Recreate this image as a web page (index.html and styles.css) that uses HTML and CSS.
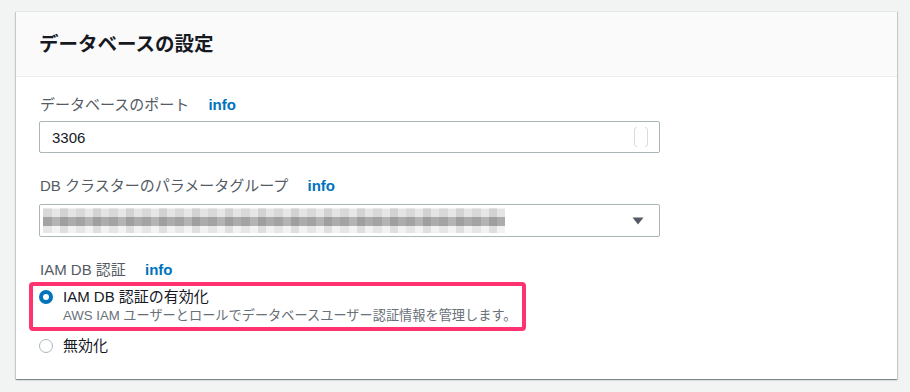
FILE: index.html
```html
<!DOCTYPE html>
<html lang="ja">
<head>
    <meta charset="UTF-8">
    <meta name="viewport" content="width=device-width, initial-scale=1.0">
    <title>データベースの設定</title>
    <link rel="stylesheet" href="styles.css">
</head>
<body>
    <div class="page">
        <div class="panel">
            <div class="panel-header">
                <h2 class="panel-title">データベースの設定</h2>
            </div>
            <div class="panel-body">
                <div class="field">
                    <div class="field-label">データベースのポート <a class="info">info</a></div>
                    <div class="text-input">
                        <span>3306</span>
                        <svg class="spinner" width="18" height="22" viewBox="0 0 18 22">
                            <path d="M5 1.5 Q2.5 1.5 2.5 4 V18 Q2.5 20.5 5 20.5" fill="none" stroke="#d9dcdc" stroke-width="1"/>
                            <path d="M13 1.5 Q15.5 1.5 15.5 4 V18 Q15.5 20.5 13 20.5" fill="none" stroke="#d9dcdc" stroke-width="1"/>
                        </svg>
                    </div>
                </div>

                <div class="field">
                    <div class="field-label">DB クラスターのパラメータグループ <a class="info">info</a></div>
                    <div class="select-input">
                        <div class="blurred"></div>
                        <svg class="caret" width="12" height="8" viewBox="0 0 12 8">
                            <path d="M0.5 0.5 H11.5 L6 7.5 Z" fill="#545b64"/>
                        </svg>
                    </div>
                </div>

                <div class="field field-last">
                    <div class="field-label">IAM DB 認証 <a class="info">info</a></div>
                    <div class="highlight">
                        <div class="option">
                            <span class="radio radio-checked"></span>
                            <span class="option-text">IAM DB 認証の有効化</span>
                        </div>
                        <div class="option-desc">AWS IAM ユーザーとロールでデータベースユーザー認証情報を管理します。</div>
                    </div>
                    <div class="option option-plain">
                        <span class="radio"></span>
                        <span class="option-text">無効化</span>
                    </div>
                </div>
            </div>
        </div>
    </div>
</body>
</html>
```

FILE: styles.css
```css
body {
    margin: 0;
    padding: 0;
    background: #f2f3f3;
    font-family: "Liberation Sans", "Noto Sans CJK JP", sans-serif;
    color: #16191f;
}

.page {
    padding: 11px 13px 13px 16px;
}

.panel {
    background: #ffffff;
    box-shadow: 0 1px 1px 0 rgba(0, 28, 36, 0.3), 1px 1px 1px 0 rgba(0, 28, 36, 0.15), -1px 1px 1px 0 rgba(0, 28, 36, 0.15);
    border-top: 1px solid #e6e8e8;
}

.panel-header {
    background: #fafafa;
    border-bottom: 1px solid #eaeded;
    height: 64px;
    display: flex;
    align-items: center;
    padding-left: 23px;
}

.panel-title {
    margin: 0;
    font-size: 19.5px;
    font-weight: bold;
    line-height: 24px;
    color: #16191f;
}

.panel-body {
    padding: 18px 23px 23px 23px;
}

.field {
    margin-bottom: 23px;
}

.field-last {
    margin-bottom: 0;
}

.field-label {
    font-size: 15px;
    line-height: 20px;
    color: #545b64;
    padding-left: 1px;
}

.info {
    color: #0073bb;
    font-weight: bold;
    margin-left: 15px;
}

.text-input,
.select-input {
    width: 621px;
    height: 32px;
    box-sizing: border-box;
    border: 1px solid #aab7b8;
    border-radius: 2px;
    margin-top: 6px;
    display: flex;
    align-items: center;
    justify-content: space-between;
}

.text-input {
    padding: 0 9px 0 12px;
    font-size: 15px;
    color: #16191f;
}

.select-input {
    height: 33px;
    margin-top: 8px;
    padding: 0 15px 0 3px;
}

.blurred {
    width: 462px;
    height: 25px;
    background:
        repeating-linear-gradient(90deg, rgba(0, 0, 0, 0.05) 0 9px, rgba(255, 255, 255, 0.1) 9px 17px, rgba(0, 0, 0, 0.08) 17px 25px, transparent 25px 33px),
        linear-gradient(#f3f3f3 0 1px, #e4e4e4 1px 9px, #acacac 9px 18px, #f2f2f2 18px 25px);
}

.caret {
    display: block;
}

.highlight {
    width: fit-content;
    margin: 2px 0 0 -10px;
    padding: 1px 6px 3px 6px;
    border: 4px solid #ff3370;
    border-radius: 4px;
}

.option {
    display: flex;
    align-items: center;
    gap: 10px;
    height: 20px;
}

.option-plain {
    margin-top: 5px;
}

.option-text {
    font-size: 15px;
    line-height: 20px;
    color: #16191f;
}

.option-desc {
    margin-left: 24px;
    margin-top: 1px;
    font-size: 13.2px;
    line-height: 16px;
    color: #687078;
}

.radio {
    width: 14px;
    height: 14px;
    box-sizing: border-box;
    border-radius: 50%;
    border: 1px solid #aab7b8;
    background: #ffffff;
}

.radio-checked {
    border: 4.5px solid #0073bb;
}
```
